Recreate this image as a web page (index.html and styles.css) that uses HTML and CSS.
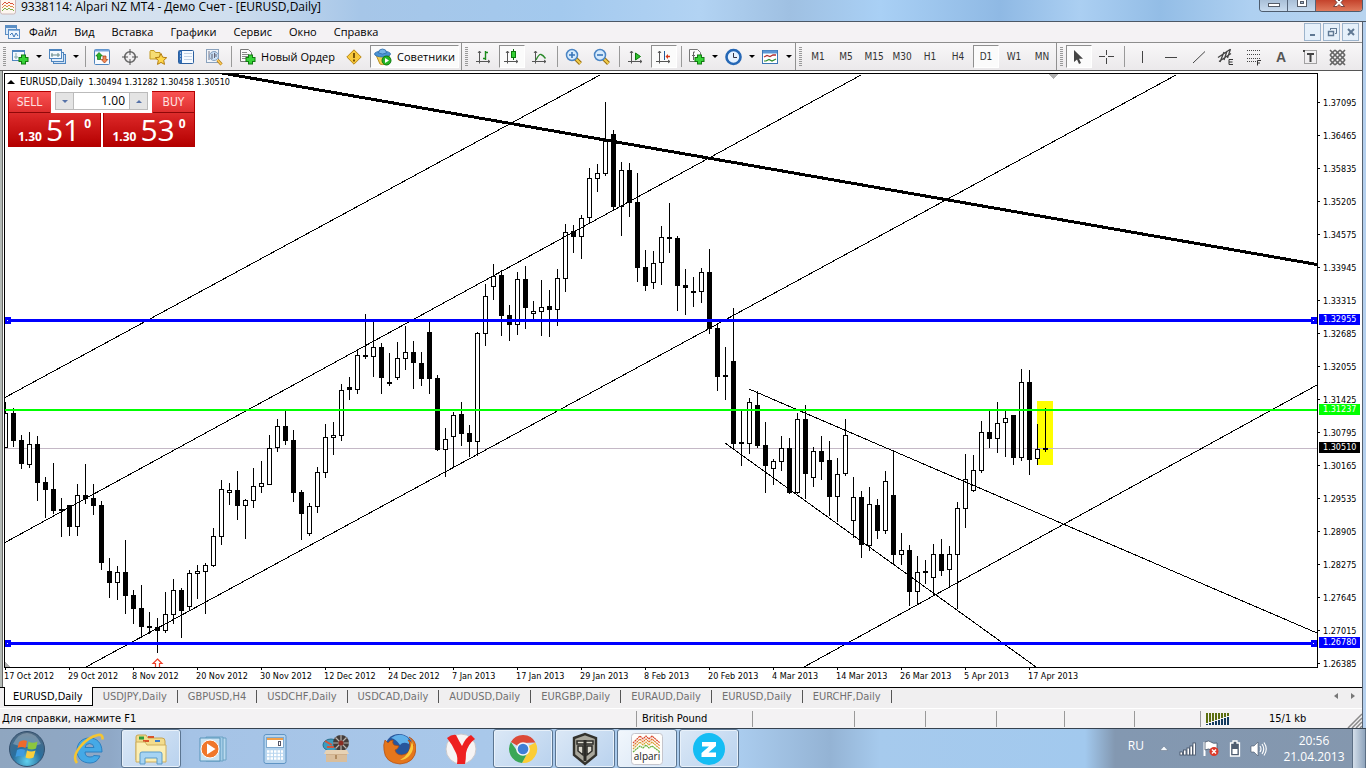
FILE: index.html
```html
<!DOCTYPE html>
<html lang="ru">
<head>
<meta charset="utf-8">
<title>9338114: Alpari NZ MT4 - Демо Счет - [EURUSD,Daily]</title>
<link rel="stylesheet" href="styles.css">
</head>
<body>
<div class="window">
<header class="titlebar">
  <svg class="app-icon" width="16" height="16" viewBox="0 0 16 16"><rect x=".5" y="-3" width="15" height="17" rx="2" fill="#fdf6f0" stroke="#cdb8b8"/><g fill="none"><path d="M2 5l3-3 2 2 2-2 2 2 1-1 2 2" stroke="#d9533a"/><path d="M2 8l3-3 2 2 2-2 2 2 1-1 2 2" stroke="#dd8a4a"/><path d="M2 11l3-3 2 2 2-2 2 2 1-1 2 2" stroke="#7fae4a"/></g></svg>
  <h1 class="title">9338114: Alpari NZ MT4 - Демо Счет - [EURUSD,Daily]</h1>
  <div class="caption">
    <button class="cap cap-min" aria-label="Свернуть"><svg width="14" height="8" viewBox="0 0 14 8"><rect x="1.500" y="3.500" width="11" height="3" fill="#fff" stroke="#555c68"/></svg></button>
    <button class="cap cap-max" aria-label="Развернуть"><svg width="12" height="8" viewBox="0 0 12 8"><rect x="1.500" y="-1.500" width="9" height="8" fill="#fff" stroke="#555c68"/><rect x="4.500" y="1.500" width="3" height="2" fill="#9fb4cc" stroke="#555c68"/></svg></button>
    <button class="cap cap-close" aria-label="Закрыть"><svg width="14" height="8" viewBox="0 0 14 8"><path d="M1.500 6.500L5 2.500 2-1h3l2 2 2-2h3L9 2.500l3.500 4H9L7 4.500l-2 2z" fill="#fff" stroke="#5a3030" stroke-width=".8"/></svg></button>
  </div>
</header>

<nav class="menubar">
  <svg width="16" height="16" viewBox="0 0 16 16"><rect x=".5" y="1.500" width="11" height="9" fill="#dceafa" stroke="#5c8ec4"/><path d="M1 3h10" stroke="#5c8ec4" stroke-width="2"/><rect x="3.500" y="5.500" width="11" height="9" fill="#eef5fd" stroke="#5c8ec4"/><path d="M4 6.500h10" stroke="#8db4de"/><path d="M5 11l2-2 2 4 2-4 2 3" fill="none" stroke="#3a76b8"/></svg>
  <a href="#">Файл</a><a href="#">Вид</a><a href="#">Вставка</a><a href="#">Графики</a><a href="#">Сервис</a><a href="#">Окно</a><a href="#">Справка</a>
  <div class="mdi">
    <button aria-label="Свернуть окно"><svg width="12" height="12" viewBox="0 0 12 12"><path d="M3 9h5" stroke="#5f7893" stroke-width="2"/></svg></button>
    <button aria-label="Восстановить окно"><svg width="12" height="12" viewBox="0 0 12 12"><path d="M4.500 4V2.500h6v5H9M4 2.500h7" fill="none" stroke="#5f7893"/><path d="M2.500 5.500h5v4h-5zM2 5.500h6" fill="none" stroke="#5f7893" stroke-width="1.400"/></svg></button>
    <button aria-label="Закрыть окно"><svg width="12" height="12" viewBox="0 0 12 12"><path d="M3 3l6 6M9 3L3 9" stroke="#5f7893" stroke-width="2"/></svg></button>
  </div>
</nav>

<div class="toolbars">
 <div class="bar bar-main">
  <i class="grip"></i>
  <button class="tb dd" aria-label="Новый график"><svg width="18" height="18" viewBox="0 0 18 18"><rect x=".5" y="2.500" width="12" height="10" fill="#f4f9ff" stroke="#4f86bf"/><path d="M1 3h11" stroke="#4f86bf" stroke-width="2"/><path d="M4 5v6M2 9h4" stroke="#8aa" /><path d="M11.500 6.500v10M6.500 11.500h10" stroke="#117a11" stroke-width="5"/><path d="M11.500 7.500v8M7.500 11.500h8" stroke="#37d337" stroke-width="3"/></svg><b class="caret"></b></button>
  <button class="tb dd" aria-label="Профили"><svg width="18" height="18" viewBox="0 0 18 18"><rect x="4.500" y="6.500" width="12" height="9" fill="#cfe2f6" stroke="#4f86bf"/><rect x="2.500" y="4.500" width="12" height="9" fill="#e3eefa" stroke="#4f86bf"/><rect x=".5" y="1.500" width="12" height="9" fill="#f4f9ff" stroke="#4f86bf"/><path d="M1 2h11" stroke="#4f86bf" stroke-width="2"/><path d="M3 5v4M2 7h9M9 5v4" stroke="#688"/></svg><b class="caret"></b></button>
  <i class="sep"></i>
  <button class="tb" aria-label="Обзор рынка"><svg width="16" height="16" viewBox="0 0 16 16"><rect x=".5" y=".5" width="15" height="15" rx="1" fill="#f8fbff" stroke="#4f86bf"/><path d="M1 1.500h14" stroke="#76a6dc" stroke-width="2"/><path d="M5 3.500L8.500 7H6.500v3.500h-3V7H1.800z" fill="#2cb52c" stroke="#0b6f0b" stroke-width=".7"/><path d="M10.500 14L7.200 10.500H9V7h3v3.500h1.800z" fill="#f08a58" stroke="#a33a10" stroke-width=".7"/></svg></button>
  <button class="tb" aria-label="Окно данных"><svg width="16" height="16" viewBox="0 0 16 16"><circle cx="8" cy="8" r="5.300" fill="none" stroke="#666" stroke-width="1.600"/><path d="M8 0v6M8 10v6M0 8h6M10 8h6" stroke="#555"/></svg></button>
  <button class="tb" aria-label="Навигатор"><svg width="18" height="18" viewBox="0 0 18 18"><path d="M1 3.500V11h10V4.500H6.500L5 2.500H1.500z" fill="#f6dd74" stroke="#c39a22"/><path d="M12 5.500l1.700 3.700 4 .5-3 2.700.8 4-3.500-2-3.500 2 .8-4-3-2.700 4-.5z" fill="#ffd84a" stroke="#b27c12"/></svg></button>
  <button class="tb" aria-label="Терминал"><svg width="16" height="16" viewBox="0 0 16 16"><rect x=".5" y="1.500" width="15" height="13" rx="1" fill="#f6faff" stroke="#2b5f9f"/><rect x="1" y="2" width="3" height="12" fill="#2f6cb5"/><path d="M2 4h1M2 7h1M2 10h1" stroke="#fff"/><path d="M6 4.500h8M6 7.500h8M6 10.500h8" stroke="#c3d2e4"/></svg></button>
  <button class="tb" aria-label="Тестер стратегий"><svg width="18" height="18" viewBox="0 0 18 18"><rect x="1.500" y="1.500" width="12" height="13" fill="#f1f5fa" stroke="#8aa2bd"/><path d="M4 3v9M7 4v6M10 3v5" stroke="#778"/><circle cx="9" cy="8" r="4.500" fill="#bfdcf7" fill-opacity=".75" stroke="#88a2c0"/><path d="M7 6v5M9.500 5v5M11 6v3" stroke="#667"/><path d="M12.500 12l4 4.500" stroke="#b07c18" stroke-width="3"/><path d="M12.500 12l4 4.500" stroke="#ffce5a" stroke-width="1.400"/></svg></button>
  <i class="sep"></i>
  <button class="tb order"><svg width="18" height="18" viewBox="0 0 18 18"><path d="M1.500 1.500h8l3 3v9h-11z" fill="#fbfbfb" stroke="#777"/><path d="M3 4.500h5M3 6.500h7M3 8.500h7M3 10.500h5" stroke="#888"/><path d="M11.500 6.500v10M6.500 11.500h10" stroke="#117a11" stroke-width="5"/><path d="M11.500 7.500v8M7.500 11.500h8" stroke="#37d337" stroke-width="3"/></svg><span>Новый Ордер</span></button>
  <button class="tb" aria-label="MetaEditor"><svg width="16" height="16" viewBox="0 0 16 16"><path d="M8 .8L15.200 8 8 15.200.8 8z" fill="#f8c93c" stroke="#b98712"/><path d="M8 4v5M8 10.500v2" stroke="#6e4a00" stroke-width="1.800"/></svg></button>
  <button class="tb on experts"><svg width="18" height="18" viewBox="0 0 18 18"><path d="M2 7q7 3 13 0l1 6q-5 5-10 3z" fill="#f4cf54" stroke="#b98f20"/><ellipse cx="8.500" cy="6" rx="8" ry="3" fill="#4a93d4" stroke="#2c6ba8" stroke-width=".8"/><path d="M4.500 5q0-4 4-4t4 4q-4 2-8 0z" fill="#77b4e8" stroke="#2c6ba8" stroke-width=".8"/><circle cx="12.500" cy="12.500" r="4.500" fill="#25b525" stroke="#0d7a0d"/><path d="M11 10l4 2.500-4 2.500z" fill="#fff"/></svg><span>Советники</span></button>
 </div>
 <div class="bar">
  <i class="grip"></i>
  <button class="tb" aria-label="Бары"><svg width="16" height="16" viewBox="0 0 16 16"><g fill="none" stroke="#555" ><path d="M3.500 2v12.500M0 12.500h14M2 4l1.500-2L5 4M12 11l2 1.500L12 14" /></g><path d="M9.500 2v9M7 9.500h2.500M9.500 3.500H12" fill="none" stroke="#1a8a1a" stroke-width="1.400"/></svg></button>
  <button class="tb on" aria-label="Японские свечи"><svg width="16" height="16" viewBox="0 0 16 16"><g fill="none" stroke="#555"><path d="M3.500 2v12.500M0 12.500h14M2 4l1.500-2L5 4M12 11l2 1.500L12 14"/></g><path d="M9.500 0v11" stroke="#0c6a0c"/><rect x="7.500" y="2.500" width="4" height="6" fill="#35cf35" stroke="#0c7a0c"/></svg></button>
  <button class="tb" aria-label="Линия"><svg width="16" height="16" viewBox="0 0 16 16"><g fill="none" stroke="#555"><path d="M3.500 2v12.500M0 12.500h14M2 4l1.500-2L5 4M12 11l2 1.500L12 14"/></g><path d="M4 11q3-6 5-5.500t4.500 4" fill="none" stroke="#2a8a2a" stroke-width="1.300"/></svg></button>
  <i class="sep"></i>
  <button class="tb" aria-label="Увеличить"><svg width="18" height="18" viewBox="0 0 18 18"><path d="M10.500 10.500l5 5" stroke="#9a6e10" stroke-width="4"/><path d="M10.500 10.500l5 5" stroke="#f2cf4e" stroke-width="2"/><circle cx="7" cy="7" r="5.500" fill="#d6ebfd" stroke="#4a85c4" stroke-width="1.500"/><path d="M4 7h6M7 4v6" stroke="#3a76b8" stroke-width="1.600"/></svg></button>
  <button class="tb" aria-label="Уменьшить"><svg width="18" height="18" viewBox="0 0 18 18"><path d="M10.500 10.500l5 5" stroke="#9a6e10" stroke-width="4"/><path d="M10.500 10.500l5 5" stroke="#f2cf4e" stroke-width="2"/><circle cx="7" cy="7" r="5.500" fill="#d6ebfd" stroke="#4a85c4" stroke-width="1.500"/><path d="M4 7h6" stroke="#3a76b8" stroke-width="1.600"/></svg></button>
  <i class="sep"></i>
  <button class="tb" aria-label="Автопрокрутка"><svg width="16" height="16" viewBox="0 0 16 16"><g fill="none" stroke="#555"><path d="M3.500 2v12.500M0 12.500h14M2 4l1.500-2L5 4M12 11l2 1.500L12 14"/></g><path d="M7.500 4l5 3.500-5 3.500z" fill="#2fc02f" stroke="#0c7a0c"/></svg></button>
  <button class="tb on" aria-label="Сдвиг графика"><svg width="16" height="16" viewBox="0 0 16 16"><g fill="none" stroke="#555"><path d="M3.500 2v12.500M0 12.500h14M2 4l1.500-2L5 4M12 11l2 1.500L12 14"/></g><path d="M8.500 2v9" stroke="#225a9a"/><path d="M9.500 7.500L12 5v1.800h2v1.500h-2V10z" fill="#d63a1a"/></svg></button>
  <i class="sep"></i>
  <button class="tb dd" aria-label="Индикаторы"><svg width="18" height="18" viewBox="0 0 18 18"><path d="M1.500 1.500h8l3 3v9h-11z" fill="#fbfbfb" stroke="#777"/><path d="M7 4H5.500v8M4 7.500h3" stroke="#666" fill="none"/><path d="M11.500 6.500v10M6.500 11.500h10" stroke="#117a11" stroke-width="5"/><path d="M11.500 7.500v8M7.500 11.500h8" stroke="#37d337" stroke-width="3"/></svg><b class="caret"></b></button>
  <button class="tb dd" aria-label="Периоды"><svg width="18" height="18" viewBox="0 0 18 18"><circle cx="8.500" cy="9" r="7" fill="#e6f2ff" stroke="#2567b5" stroke-width="2.600"/><path d="M8.500 5v4.500H12" fill="none" stroke="#334" /></svg><b class="caret"></b></button>
  <button class="tb dd" aria-label="Шаблоны"><svg width="18" height="18" viewBox="0 0 18 18"><rect x=".5" y="2.500" width="15" height="13" fill="#fff" stroke="#3b76b5"/><path d="M1 4h14" stroke="#5b96d5" stroke-width="3"/><path d="M2 9l3-1.500 3 1 3-1.500h3" fill="none" stroke="#b23030" stroke-width="1.300"/><path d="M2 13h2l3-1.500 3 1.500 4-2" fill="none" stroke="#2a8a2a" stroke-width="1.200"/></svg><b class="caret"></b></button>
 </div>
 <div class="bar periods">
  <i class="grip"></i>
  <button class="tb">M1</button><button class="tb">M5</button><button class="tb">M15</button><button class="tb">M30</button><button class="tb">H1</button><button class="tb">H4</button><button class="tb on">D1</button><button class="tb">W1</button><button class="tb">MN</button>
 </div>
 <div class="bar bar-last">
  <i class="grip"></i>
  <button class="tb on" aria-label="Курсор"><svg width="16" height="16" viewBox="0 0 16 16"><path d="M3 1v12l3-2.500L8 15l2-1-2-4.200h4z" fill="#444"/></svg></button>
  <button class="tb" aria-label="Перекрестие"><svg width="16" height="16" viewBox="0 0 16 16"><path d="M7.500 1v5M7.500 9v6M0 7.500h6M9 7.500h6" stroke="#444"/></svg></button>
  <i class="sep"></i>
  <button class="tb" aria-label="Вертикальная линия"><svg width="16" height="16" viewBox="0 0 16 16"><path d="M9.500 2v12" stroke="#444"/></svg></button>
  <button class="tb" aria-label="Горизонтальная линия"><svg width="16" height="16" viewBox="0 0 16 16"><path d="M4 8.500h12" stroke="#444"/></svg></button>
  <button class="tb" aria-label="Трендовая линия"><svg width="16" height="16" viewBox="0 0 16 16"><path d="M4 14L16 2.500" stroke="#444"/></svg></button>
  <button class="tb" aria-label="Канал"><svg width="18" height="18" viewBox="0 0 18 18"><path d="M2 9.500l12-8M3 13.500l12-8M4 14l4-10M8 12l3-9M11.500 10l3-9" stroke="#444" stroke-width="1.300"/><path d="M17 11.500h-4v5h4M13 14h3.500" fill="none" stroke="#333"/></svg></button>
  <button class="tb" aria-label="Фибоначчи"><svg width="18" height="18" viewBox="0 0 18 18"><path d="M3 2.500h14M3 6.500h14M3 10.500h14M3 13.500h9" stroke="#444" stroke-dasharray="1 1"/><path d="M17 12.500h-3.500v5M13.500 15H16" fill="none" stroke="#333"/></svg></button>
  <button class="tb glyph" aria-label="Текст">A</button>
  <button class="tb" aria-label="Метка"><svg width="16" height="16" viewBox="0 0 16 16"><rect x="3.500" y="1.500" width="12" height="13" fill="none" stroke="#555" stroke-dasharray="1 1"/><path d="M2 1h2v2H2z" fill="#444"/><path d="M6 5h7M9.500 4v9" stroke="#444" stroke-width="2"/></svg></button>
  <button class="tb" aria-label="Стрелки"><svg width="18" height="18" viewBox="0 0 18 18"><g stroke="#666" stroke-width="1.600"><path d="M2 7l5-5M2 12L12 2M2 17L17 2M7 17L17 7M12 17l5-5"/><path d="M12 2l5 5M7 2l10 10M2 2l15 15M2 7l10 10M2 12l5 5"/></g></svg></button>
 </div>
</div>

<main class="workspace">
  <section class="plot">
    <svg id="chart" viewBox="5 74 1312 593" preserveAspectRatio="none" shape-rendering="crispEdges"></svg>
    <p class="ohlc"><span class="up"></span><span class="symbol">EURUSD,Daily</span><span>1.30494 1.31282 1.30458 1.30510</span></p>
    <div class="trade">
      <button class="side sell"><span class="name">SELL</span><span class="quote"><b>1.30</b><em>51</em><sup>0</sup></span></button>
      <button class="side buy"><span class="name">BUY</span><span class="quote"><b>1.30</b><em>53</em><sup>0</sup></span></button>
      <div class="lots"><button class="step down" aria-label="Меньше"></button><input value="1.00" aria-label="Объём"><button class="step more" aria-label="Больше"></button></div>
    </div>
  </section>
  <div class="prices">
    <ol>
      <li>1.37095</li><li>1.36465</li><li>1.35835</li><li>1.35205</li><li>1.34575</li><li>1.33945</li><li>1.33315</li><li>1.32685</li><li>1.32055</li><li>1.31425</li><li>1.30795</li><li>1.30165</li><li>1.29535</li><li>1.28905</li><li>1.28275</li><li>1.27645</li><li>1.27015</li><li>1.26385</li>
    </ol>
    <span class="tag blue" style="top:241px">1.32955</span>
    <span class="tag green" style="top:331px">1.31237</span>
    <span class="tag black" style="top:369px">1.30510</span>
    <span class="tag blue" style="top:564px">1.26780</span>
  </div>
  <ol class="dates">
    <li>17 Oct 2012</li><li>29 Oct 2012</li><li>8 Nov 2012</li><li>20 Nov 2012</li><li>30 Nov 2012</li><li>12 Dec 2012</li><li>24 Dec 2012</li><li>7 Jan 2013</li><li>17 Jan 2013</li><li>29 Jan 2013</li><li>8 Feb 2013</li><li>20 Feb 2013</li><li>4 Mar 2013</li><li>14 Mar 2013</li><li>26 Mar 2013</li><li>5 Apr 2013</li><li>17 Apr 2013</li>
  </ol>
</main>

<nav class="tabs">
  <a class="active" href="#">EURUSD,Daily</a><a href="#">USDJPY,Daily</a><a href="#">GBPUSD,H4</a><a href="#">USDCHF,Daily</a><a href="#">USDCAD,Daily</a><a href="#">AUDUSD,Daily</a><a href="#">EURGBP,Daily</a><a href="#">EURAUD,Daily</a><a href="#">EURUSD,Daily</a><a href="#">EURCHF,Daily</a>
  <div class="arrows"><button aria-label="Назад"><svg width="4" height="6" viewBox="0 0 4 6"><path d="M4 0v6L0 3z" fill="#777"/></svg></button><button aria-label="Вперёд"><svg width="4" height="6" viewBox="0 0 4 6"><path d="M0 0v6l4-3z" fill="#777"/></svg></button></div>
</nav>

<footer class="status">
  <span>Для справки, нажмите F1</span><span>British Pound</span><span></span><span></span><span></span><span></span><span></span><span></span>
  <span class="traffic"><svg width="24" height="12" viewBox="0 0 24 12" shape-rendering="crispEdges"><path d="M1 0v10M4 0v9M7 0v8M10 0v7M13 0v6M16 0v5M19 0v4M22 0v3" stroke="#5c6f10" stroke-width="2"/><path d="M1 11v1M4 10v2M7 9v3M10 8v4M13 7v5M16 6v6M19 5v7M22 4v8" stroke="#123a5e" stroke-width="2"/></svg><span>15/1 kb</span></span>
  <svg class="resize" width="15" height="16" viewBox="0 0 15 16"><path d="M1 16L15 2M5 16L15 6M9 16l6-6M13 16l2-2" stroke="#8a8a8a" stroke-width="1.500"/></svg>
</footer>
</div>

<footer class="taskbar">
  <button class="orb" aria-label="Пуск"><svg width="38" height="38" viewBox="0 0 38 38"><defs><radialGradient id="orb" cx=".5" cy=".85" r=".9"><stop offset="0" stop-color="#5fd0ee"/><stop offset=".45" stop-color="#2a6f9e"/><stop offset="1" stop-color="#56687c"/></radialGradient></defs><circle cx="19" cy="19" r="17.500" fill="url(#orb)" stroke="#33506e"/><path d="M5 14Q10 3 19 3t14 11Q19 20 5 14z" fill="#fff" opacity=".25"/><path d="M11 12q4-3 8-1l-1.500 7q-4-2-8 0z" fill="#ee6a2c"/><path d="M20.500 11.500q4 2.500 9 0L28 18.500q-4 2-8.500 0z" fill="#8cc63e"/><path d="M9 20q4-2 8 0l-1.500 7q-4-2-8 0z" fill="#3f9be0"/><path d="M19 20.500q4 2 8.500 0l-2 7q-4 2-8 0z" fill="#fbcf3c"/></svg></button>
  <button class="task" aria-label="Internet Explorer"><svg width="34" height="34" viewBox="0 0 34 34"><path d="M28 24q-3 7-10 7C10 31 5 26 5 18.500S10 6 17.500 6 30 11 30 20H13q0 5 5 5 3 0 4-1.500zM13 15.500h9q-.5-4-4.500-4t-4.500 4z" fill="#45a9e6" stroke="#2c7fc0" fill-rule="evenodd"/><path d="M5 31Q0 25 8 15T26 3q5-1 4.500 4.500" fill="none" stroke="#f5c531" stroke-width="2.600"/></svg></button>
  <button class="task open" aria-label="Проводник"><svg width="34" height="32" viewBox="0 0 34 32"><path d="M2 27V4q0-2 2-2h8l2 3h14q3 0 3 3v19z" fill="#f3dc8c" stroke="#c6a453"/><path d="M5 5h5" stroke="#2c9c3c" stroke-width="3"/><path d="M14 4h6M9 8h6" stroke="#d8532a" stroke-width="2"/><path d="M21 8h5" stroke="#3b7cc9" stroke-width="2"/><path d="M2 9h9l2 3h19v17H2z" fill="#fbeeb3" stroke="#cfae5c"/><path d="M6 31V21q0-2 2-2h18q2 0 2 2v10h-5v-6H11v6z" fill="#a6d4f3" stroke="#5b9bc9"/></svg></button>
  <button class="task" aria-label="Windows Media Player"><svg width="30" height="30" viewBox="0 0 30 30"><path d="M14 4h14v22H14z" fill="#b9d9ee" stroke="#6ba2c4"/><path d="M8 3h17v24H8z" fill="#a3cde8" stroke="#6ba2c4"/><path d="M2 4h20v23H2z" fill="#c9e3f3" stroke="#5794ba"/><circle cx="12" cy="15" r="9" fill="#f0772b" stroke="#fff"/><path d="M9 9.500l8.500 5.500L9 20.500z" fill="#fff"/></svg></button>
  <button class="task" aria-label="Калькулятор"><svg width="24" height="30" viewBox="0 0 24 30"><rect x="1" y=".5" width="22" height="29" rx="2" fill="#b6d4ee" stroke="#5f94c4"/><rect x="3.500" y="3.500" width="17" height="10" fill="#fff" stroke="#7ea9cf"/><path d="M4 5h16" stroke="#f1a04a" stroke-width="2"/><rect x="15.500" y="7.500" width="2" height="4" fill="none" stroke="#556"/><path d="M4 17.500h16M4 21h16M4 24.500h16" stroke="#fff" stroke-width="2.600" stroke-dasharray="2.500 1"/></svg></button>
  <button class="task" aria-label="Архиватор"><svg width="30" height="30" viewBox="0 0 30 30"><ellipse cx="9" cy="11" rx="8" ry="6" fill="#3c9cc0" stroke="#2a6f8c"/><path d="M3 7l7 4M5 13h7" stroke="#d6553a" stroke-width="2"/><circle cx="19" cy="9" r="8" fill="#443c3a"/><g stroke="#b8b2ae" stroke-width="1.200"><path d="M19 1v16M11 9h16M13.500 3.500l11 11M24.500 3.500l-11 11"/></g><circle cx="19" cy="9" r="2.500" fill="#8a2c22"/><path d="M4 16h21v12H4z" fill="#cfb08c"/><path d="M4 16h21l2 4H2z" fill="#e7d2b4"/><path d="M4 21h21v7H4z" fill="#d9be9c"/><path d="M14 21v4" stroke="#b08c62" stroke-width="2"/></svg></button>
  <button class="task" aria-label="Firefox"><svg width="34" height="34" viewBox="0 0 34 34"><circle cx="17" cy="16" r="14" fill="#28569c"/><path d="M9 6q8-6 16-1 3 3 2 7-6-3-9 1-4-6-9-7z" fill="#5fb0ea"/><path d="M3 8l3 3q2-3 5-3-1 3 1 5l5 1q-1 3-4 4 1 5 7 5 8-1 8-9 0-4-2-6 4 1 5 6-1-7-4-9 7 3 7 12-1 14-16 15Q3 31 2 18 1 13 3 8z" fill="#e4761c" stroke="#b24a0c" stroke-width=".7"/><path d="M30 9q3 8-2 14-4 5-10 5 10-5 12-19z" fill="#fbc93c"/></svg></button>
  <button class="task" aria-label="Яндекс"><svg width="34" height="34" viewBox="0 0 34 34"><circle cx="17" cy="17" r="15" fill="#f6f4f4" stroke="#c8c8cc"/><path d="M3 6q5-4 9-3 3 6 6 11 4-9 9-11l4 4q-7 5-9 14 0 6-1 11h-8q1-7-1-11Q8 12 3 6z" fill="#ee2020"/></svg></button>
  <button class="task open" aria-label="Chrome"><svg width="30" height="30" viewBox="0 0 30 30"><path d="M15 15L2.900 8A14 14 0 0 1 27.500 8.500L15 9z" fill="#dc4a38"/><path d="M15 15L27.500 8.500A14 14 0 0 1 14 29l6-11z" fill="#fbcd36"/><path d="M15 15l5 3-6 11A14 14 0 0 1 2.900 8l7 10z" fill="#3aa757"/><circle cx="15" cy="15" r="6.800" fill="#f4f6fa"/><circle cx="15" cy="15" r="5.300" fill="#3f7fd6"/></svg></button>
  <button class="task open" aria-label="World of Tanks"><svg width="26" height="34" viewBox="0 0 26 34"><path d="M2 6l11-4 11 4v17l-11 9L2 23z" fill="#a9a79c" stroke="#33322d" stroke-width="2.400"/><path d="M5 9h16v3H5zM6 14h5v9l-5-4zM20 14h-5v9l5-4z" fill="#dcdacf" stroke="#2d2c28" stroke-width="1.500"/><path d="M13 8v21" stroke="#2d2c28" stroke-width="3"/></svg></button>
  <button class="task open lit" aria-label="Alpari"><svg width="32" height="32" viewBox="0 0 32 32"><rect x=".5" y=".5" width="31" height="31" rx="3" fill="#fefdfb" stroke="#c5c5cc"/><g fill="none" stroke-width="1.200" stroke-dasharray="2 .5"><path d="M2 10l7-7 3 3 3-3 3 3 3-3 8 7" stroke="#d8462a"/><path d="M2 13l7-7 3 3 3-3 3 3 3-3 8 7" stroke="#e0752e"/><path d="M2 16l7-7 3 3 3-3 3 3 3-3 8 7" stroke="#d9a136"/><path d="M2 19l7-6 3 2 3-3 3 3 3-2 8 6" stroke="#69b23b"/></g><text x="16" y="27" text-anchor="middle" class="logo-text">alpari</text></svg></button>
  <button class="task open" aria-label="Zello"><svg width="34" height="34" viewBox="0 0 34 34"><circle cx="17" cy="17" r="16" fill="#14bdf4"/><path d="M10 10h14v4l-7.500 6.500H24v4.500H9.500v-4l7.500-6.500h-7z" fill="#fff"/></svg></button>

  <div class="tray">
    <span class="lang">RU</span>
    <svg class="t-up" width="8" height="8" viewBox="0 0 8 8"><path d="M4 1l4 4.500H0z" fill="#f4f8fc" stroke="#5d6d82" stroke-width=".5"/></svg>
    <svg class="t-net" width="18" height="14" viewBox="0 0 18 14"><g fill="#fff" stroke="#3f4d60" stroke-width=".8"><rect x="1" y="10" width="2.500" height="3"/><rect x="4.500" y="8" width="2.500" height="5"/><rect x="8" y="6" width="2.500" height="7"/><rect x="11" y="4" width="2.500" height="9"/><rect x="14" y="1" width="2.500" height="12"/></g></svg>
    <svg class="t-flag" width="18" height="17" viewBox="0 0 18 17"><path d="M2.500 2v14" stroke="#fff" stroke-width="2"/><path d="M3 2q4-2 6 0t6 1v8q-4 1-6-1t-6 0z" fill="#fff" stroke="#48566a" stroke-width=".8"/><circle cx="12" cy="11.500" r="4.500" fill="#dc3a2a"/><path d="M10 9.500l4 4M14 9.500l-4 4" stroke="#fff" stroke-width="1.400"/></svg>
    <svg class="t-bat" width="12" height="17" viewBox="0 0 12 17"><path d="M4 1h4v2h2.500v13h-9V3H4z" fill="#4f5d70" stroke="#fff" stroke-width="1.300"/><path d="M3.500 9h5v5h-5z" fill="#fff"/></svg>
    <svg class="t-vol" width="17" height="16" viewBox="0 0 17 16"><path d="M1 5h3l4-4v14l-4-4H1z" fill="#fff" stroke="#48566a" stroke-width=".6"/><path d="M10 5q2 3 0 6M12 3q3.500 5 0 10M14 1.500q4.500 6.500 0 13" fill="none" stroke="#fff" stroke-width="1.100"/></svg>
    <time class="clock">20:56<br>21.04.2013</time>
  </div>
  <button class="desk" aria-label="Рабочий стол"></button>
</footer>
<script src="chart.js"></script>
</body>
</html>
```
FILE: styles.css
```css
* { box-sizing: border-box; }
body { margin: 0; height: 100vh; display: flex; flex-direction: column; overflow: hidden; background: #b5d0ee; color: #000; font: 12px/16px "Open Sans", "Noto Sans", sans-serif; }
h1, p, ol { margin: 0; padding: 0; font-weight: normal; list-style: none; }
button { padding: 0; border: 0; background: none; font: inherit; color: inherit; display: flex; align-items: center; justify-content: center; }
a { color: inherit; text-decoration: none; }
svg { display: block; flex: none; }

.window { flex: 1; min-height: 0; display: flex; flex-direction: column; margin-right: 3px; border-right: 1px solid #55606e; }

.titlebar { height: 22px; flex: none; display: flex; align-items: flex-start; margin-right: -4px; padding-right: 3px; border-bottom: 1px solid #4c5866; background: linear-gradient(90deg, #dfe8f1 0, #cfdeee 230px, #a6c6e8 360px, #a3c9ee 560px, #b2d3f3 700px, #9fc0e2 790px, #a9d0f5 880px, #8fb9e4 1000px, #abcff2 1080px, #93bde6 1160px, #aed0f1 1250px, #b8d4ef 100%); }
.app-icon { margin: 0 5px 0 0; }
.title { flex: 1; font-size: 12px; line-height: 14px; white-space: nowrap; }
.caption { display: flex; height: 12px; border: 1px solid #4d5c6e; border-top: 0; border-radius: 0 0 4px 4px; overflow: hidden; }
.cap { width: 28px; background: linear-gradient(#a9bfd7, #c8dbee); border-right: 1px solid #55657a; align-items: flex-start; }
.cap-close { width: 46px; border: 0; background: linear-gradient(#c4432c, #e07a5c); }

.menubar { height: 21px; flex: none; display: flex; align-items: center; padding: 0 3px 0 5px; border-bottom: 1px solid #8d8d8d; background: #f4f2f4; font-size: 11px; }
.menubar a { padding: 0 9px 0 8px; }
.mdi { margin-left: auto; display: flex; gap: 2px; }
.mdi button { width: 17px; height: 18px; border: 1px solid #9db4cc; background: #e6f0fa; }

.toolbars { height: 27px; flex: none; display: flex; background: linear-gradient(#f8f7f8, #ebe9eb); overflow: hidden; }
.bar { display: flex; align-items: center; flex: none; border-right: 1px solid #909090; }
.bar-main { padding-right: 2px; }
.bar-last { border: 0; }
.grip { width: 8px; height: 20px; flex: none; background: repeating-linear-gradient(#999 0 1px, transparent 1px 2px) 3px 0 / 3px 20px no-repeat; }
.sep { width: 6px; height: 21px; flex: none; background: linear-gradient(#999, #999) 3px 0 / 1px 21px no-repeat; }
.tb { width: 28px; height: 23px; flex: none; }
.tb.on { width: 26px; margin: 0 1px; background: #fbfbfb; border: 1px solid #8f8f8f; border-right-color: #fff; border-bottom-color: #fff; }
.tb.dd { width: 37px; gap: 6px; }
.caret { border: 3px solid transparent; border-top-color: #000; border-bottom: 0; }
.tb.order { width: 106px; gap: 4px; }
.tb.experts { width: 89px; margin: 0 0 0 2px; gap: 5px; }
.order, .experts { font-size: 11px; white-space: nowrap; }
.periods .tb { font: 10px/14px "DejaVu Sans Condensed", "DejaVu Sans", sans-serif; color: #333; }
.tb.glyph { font: bold 14px/16px "Liberation Sans", sans-serif; color: #555; }

.workspace { flex: 1; min-height: 0; display: grid; grid-template: minmax(0, 1fr) 19px / minmax(0, 1fr) 44px; padding: 2px 0 0 4px; border-top: 1px solid #565656; background: linear-gradient(90deg, #b4bab6 2px, #666 2px 3px, #fff 3px); font: 9px/12px "DejaVu Sans Condensed", "DejaVu Sans", sans-serif; }
.plot { position: relative; border: 1px solid #000; overflow: hidden; }
#chart { width: 100%; height: 100%; }
.ohlc { position: absolute; left: 2px; top: 1px; display: flex; align-items: center; gap: 5px; white-space: nowrap; line-height: 14px; }
.symbol { font-size: 10px; }
.up { border: 4px solid transparent; border-bottom-color: #000; border-top: 0; }
.prices { position: relative; grid-row: 1 / 3; grid-column: 2; padding: 13px 0 7px; }
.prices ol { height: 100%; display: flex; flex-direction: column; }
.prices li { flex: 1; display: flex; align-items: center; gap: 3px; }
.prices li::before { content: ""; width: 2px; height: 1px; background: #000; }
.tag { position: absolute; left: 1px; width: 41px; height: 11px; padding-left: 4px; line-height: 11px; color: #fff; }
.tag.blue { background: #00f; }
.tag.green { background: #0f0; }
.tag.black { background: #000; }
.dates { display: flex; }
.dates li { flex: 0 0 64px; white-space: nowrap; }
.dates li::before { content: ""; display: block; width: 1px; height: 2px; margin-left: 1px; background: #000; }

.trade { position: absolute; left: 3px; top: 17px; display: grid; grid-template-columns: 93px 92px; gap: 2px; color: #fff; }
.side { display: block; height: 56px; border: 1px solid #b30000; background: linear-gradient(#f85252, #d62222 50%, #b40000); }
.name { display: block; width: 41px; height: 21px; font-size: 12px; line-height: 20px; color: #ffe0e0; border-bottom: 1px solid #8e0808; }
.buy .name { margin-left: auto; }
.quote { display: flex; justify-content: center; align-items: flex-start; height: 33px; line-height: 33px; font-family: "Open Sans", sans-serif; gap: 4px; }
.quote b { font-size: 12px; line-height: 47px; }
.quote em { font-style: normal; font-size: 30px; }
.quote sup { font-size: 12px; font-weight: bold; line-height: 22px; }
.lots { position: absolute; left: 43px; top: 0; width: 101px; height: 22px; padding: 1px 4px 3px; background: #fff; display: flex; }
.lots input { flex: 1; min-width: 0; border: 1px solid #bbb; border-width: 1px 0; padding: 0 4px; text-align: right; font: 12px/16px "Open Sans", sans-serif; color: #000; }
.step { width: 19px; border: 1px solid #bbb; background: #e4e4e4; }
.step::after { content: ""; border: 3px solid transparent; }
.down::after { border-top-color: #5672a8; border-bottom: 0; }
.more::after { border-bottom-color: #5672a8; border-top: 0; }

.tabs { height: 21px; flex: none; display: flex; align-items: center; padding: 0 0 4px 4px; border-top: 1px solid #000; background: #f0eff0; color: #707070; font: 11px/13px "DejaVu Sans Condensed", "DejaVu Sans", sans-serif; }
.tabs a { padding: 0 10px; border-right: 1px solid #555; white-space: nowrap; }
.tabs .active { align-self: stretch; margin: -1px 0 -2px; padding: 3px 9px 0 8px; border: 1px solid #000; border-top: 0; background: #fff; color: #000; }
.arrows { margin-left: auto; display: flex; gap: 13px; padding-right: 7px; }

.status { position: relative; height: 20px; flex: none; display: grid; grid-template-columns: minmax(0, 1fr) 116px 102px 71px 71px 68px 70px 66px 162px; align-items: center; background: #f3f2f3; border-top: 1px solid #fff; font: 11px/16px "DejaVu Sans Condensed", "DejaVu Sans", sans-serif; }
.status > span { height: 16px; padding-left: 5px; border-left: 1px solid #999; white-space: nowrap; }
.status > span:first-child { border: 0; padding-left: 2px; }
.traffic { display: flex; align-items: center; gap: 39px; }
.resize { position: absolute; right: 0; bottom: 0; }

.taskbar { height: 40px; flex: none; display: flex; border-top: 1px solid #35424f; background: linear-gradient(90deg, #8fa6c0 0, #8fa8c6 110px, #a5c3e6 190px, #a9c8ea 480px, #aaccee 740px, #94b3d4 830px, #a6caed 880px, #a2c9ee 1085px, #8398b1 1115px, #8497ae 100%); }
.orb { width: 59px; padding-right: 5px; }
.task { width: 60px; margin-right: 2px; }
.task.open { border: 1px solid #5b7591; border-radius: 3px; background: linear-gradient(135deg, #dbe8f6, #b9d2ee); box-shadow: inset 0 0 0 1px #e8f1fa; }
.task.lit { background: linear-gradient(135deg, #f2f7fc, #d3e3f5); }
.logo-text { font: 10px "Open Sans", sans-serif; fill: #222; }
.tray { margin-left: auto; display: flex; align-items: center; color: #fff; }
.lang { margin: -6px 16px 0 0; }
.t-up { margin-right: 11px; }
.t-net { margin-right: 5px; }
.t-flag { margin-right: 9px; }
.t-bat { margin-right: 9px; }
.clock { width: 76px; margin-left: 9px; text-align: center; }
.desk { width: 14px; border: 1px solid #5c6f85; border-width: 0 1px; background: linear-gradient(90deg, #d3deea, #8fa4bc); }
```
FILE: chart.js
```js
// Daily bars, 8px apart: high, body top, body bottom, low, 1 = falling day.
const bars = `
402 413 448 448 0|408 413 441 447 1|435 440 464 469 1|432 444 465 468 0|436 444 483 501 1|477 482 490 518 1|463 489 511 514 1|498 509 511 537 1|505 505 527 536 1|484 495 527 536 0
464 495 499 504 1|484 498 506 515 1|501 505 563 570 1|558 571 583 598 1|566 572 583 600 0|540 572 596 614 1|590 595 609 624 1|585 608 627 638 1|612 626 628 634 1|618 627 631 653 1
592 614 631 633 0|579 590 615 624 0|588 590 611 638 1|570 573 607 611 0|565 571 574 599 0|563 565 572 614 0|528 536 566 567 0|480 489 537 545 0|483 490 493 505 0|471 490 506 520 1
499 500 506 539 0|468 486 501 508 0|461 483 487 493 0|435 448 485 485 0|419 426 448 452 0|411 426 441 445 1|430 440 493 502 1|490 492 514 540 1|503 506 534 536 0|467 472 507 513 0
424 437 473 478 0|422 435 438 455 0|384 390 436 441 0|377 387 390 400 1|350 355 390 394 0|314 355 357 359 1|322 347 357 377 0|343 347 378 394 1|353 382 384 386 1|342 358 378 380 0
326 352 359 370 0|341 352 363 389 1|352 363 379 386 1|322 332 379 394 1|375 378 450 451 1|428 439 450 477 0|412 415 437 468 0|402 414 434 446 1|425 433 442 457 1|332 333 442 456 0
284 296 334 346 0|264 276 287 300 0|270 275 316 336 1|305 315 325 341 1|272 279 325 335 0|266 279 308 329 1|301 311 314 319 0|280 307 312 336 0|290 306 310 337 1|269 278 310 326 0
224 232 279 292 0|225 231 237 253 1|215 218 237 259 0|168 178 218 223 0|164 173 179 192 0|102 141 174 176 0|130 134 207 210 1|162 170 207 236 0|163 170 203 217 1|173 202 268 282 1
250 267 286 291 1|251 263 283 289 0|226 237 263 285 0|203 237 239 253 1|236 238 286 311 1|269 285 288 315 1|277 291 293 307 1|268 272 292 303 0|249 272 329 334 1|324 328 377 391 1
347 375 377 400 1|308 361 444 449 1|411 442 444 466 1|398 402 444 454 0|391 405 446 448 1|422 445 466 493 1|459 461 469 485 0|436 448 462 471 0|438 448 493 494 1|413 419 493 494 0
405 419 474 499 1|447 451 478 487 0|436 451 462 480 1|441 460 497 516 1|458 474 497 522 0|419 435 474 476 0|477 497 521 538 0|491 497 545 558 1|487 504 546 551 0|499 505 531 539 1
471 481 531 534 0|450 495 555 565 1|533 550 555 565 0|545 550 592 606 1|556 572 592 605 0|560 571 573 584 1|544 554 578 595 0|539 554 571 576 1|546 554 570 586 0|502 508 555 609 0
454 479 509 528 0|455 470 491 492 0|421 432 471 473 0|411 432 439 448 1|402 423 439 453 0|411 418 423 457 0|415 415 458 465 1|369 382 458 461 0|370 382 460 475 1|424 449 459 465 0
408 448 450 452 1`.trim().split(/[|\n]/).map(row => row.split(' ').map(Number));

const svg = document.getElementById('chart');
const add = (tag, attrs) => {
  const node = document.createElementNS('http://www.w3.org/2000/svg', tag);
  for (const key in attrs) node.setAttribute(key, attrs[key]);
  svg.appendChild(node);
};
const rect = (x, y, width, height, fill) => add('rect', { x, y, width, height, fill });
const line = (x1, y1, x2, y2, w) => add('line', { x1, y1, x2, y2, stroke: '#000', 'stroke-width': w });

rect(1037, 401, 16, 64, '#ff0');
rect(5, 448, 1312, 1, '#c4b8c6');

bars.forEach(([high, top, bottom, low, falling], i) => {
  const x = 5 + 8 * i;
  rect(x, high, 1, low - high, '#000');
  rect(x - 2, top, 5, bottom - top, '#000');
  if (!falling && bottom - top > 2) rect(x - 1, top + 1, 3, bottom - top - 2, '#fff');
});

line(5, 397.5, 600, 75, 1);
line(5, 542.5, 861, 75, 1);
line(86, 667, 1176, 75, 1);
line(804, 667, 1317, 385, 1);
line(749, 389, 1317, 633, 1);
line(725, 443, 1036, 667, 1);
line(222, 73, 1317, 264.5, 3);

rect(5, 409, 1312, 2, '#0f0');
[319, 642].forEach(y => {
  rect(5, y, 1312, 3, '#00f');
  [5, 1311].forEach(x => {
    rect(x, y - 2, 6, 7, '#00f');
    rect(x + 2, y + 1, 1, 1, '#fff');
  });
});

add('path', { d: 'M1049 74h9l-4.500 5z', fill: '#b0b0b0' });
add('path', { d: 'M5 662l5 5H5z', fill: '#b0b0b0' });
add('path', { d: 'M157.500 659l4.500 4.500h-2.500v4h-4v-4H153z', fill: '#fff', stroke: '#f0402a', 'stroke-width': 1.2, 'shape-rendering': 'auto' });
```
